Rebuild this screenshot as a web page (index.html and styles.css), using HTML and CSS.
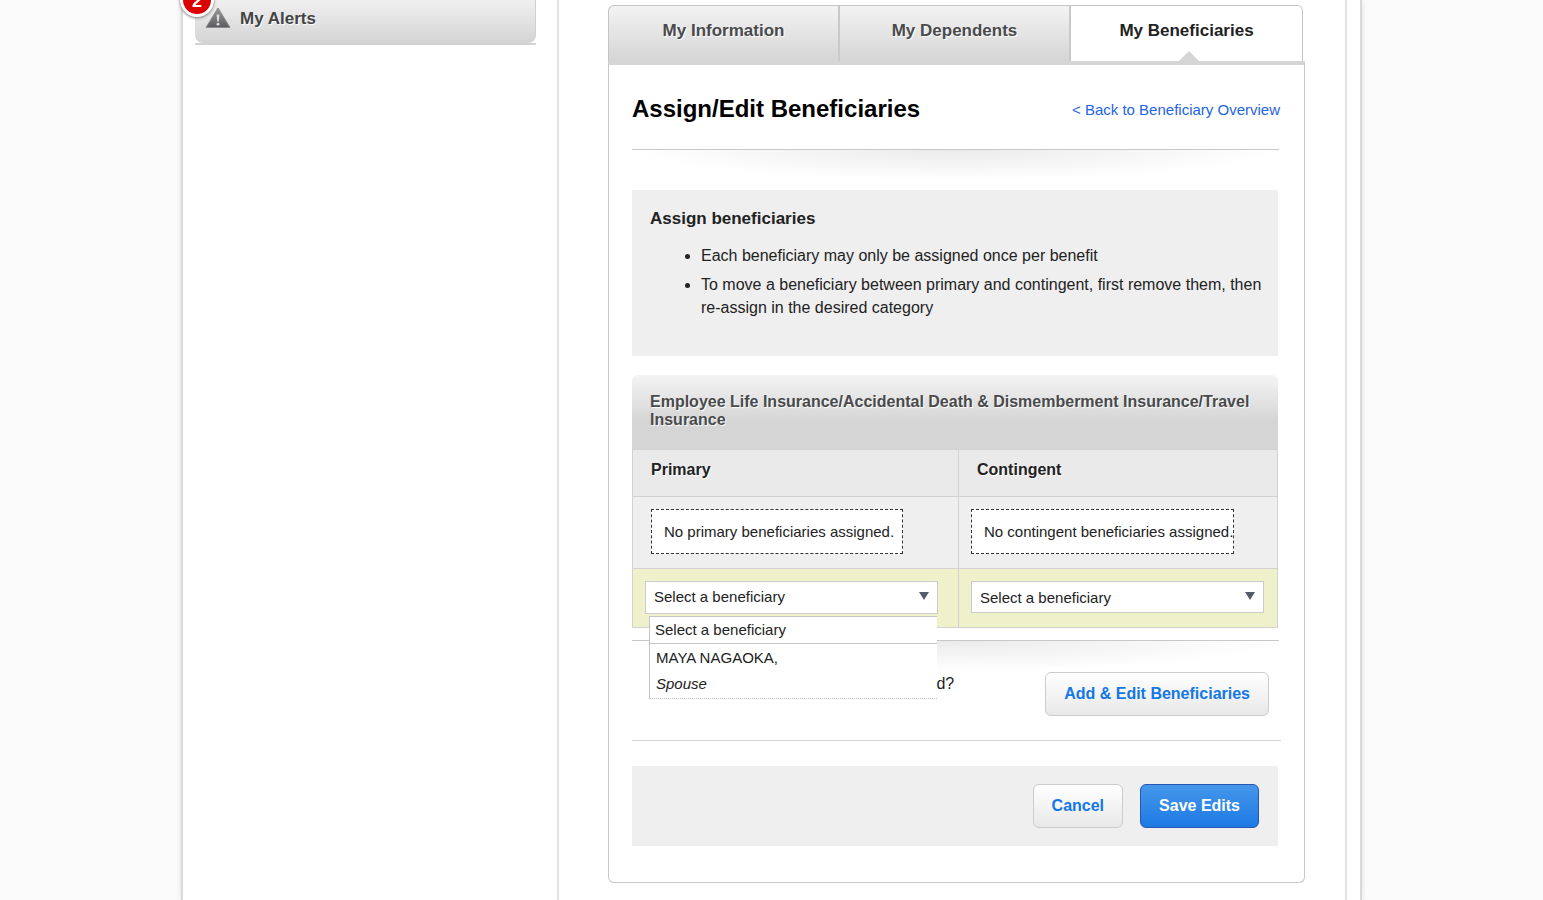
FILE: index.html
```html
<!DOCTYPE html>
<html lang="en">
<head>
<meta charset="utf-8">
<meta name="viewport" content="width=device-width, initial-scale=1">
<title>My Beneficiaries</title>
<link rel="stylesheet" href="styles.css">
</head>
<body>
<div class="page">
  <aside class="sidebar">
    <div class="alerts">
      <span class="badge">2</span>
      <svg class="alert-icon" viewBox="0 0 26 22" aria-hidden="true">
        <defs><linearGradient id="tri" x1="0" y1="0" x2="0" y2="1"><stop offset="0" stop-color="#999"/><stop offset="1" stop-color="#5c5d60"/></linearGradient></defs>
        <path d="M13 1 L25 20.5 H1 Z" fill="url(#tri)" stroke="#8a8a8c" stroke-width="1" stroke-linejoin="round"/>
        <path d="M11.6 7.5 H14.4 L13.8 14.5 H12.2 Z" fill="#ddd"/>
        <circle cx="13" cy="17.2" r="1.4" fill="#ddd"/>
      </svg>
      <h2 class="alerts-title">My Alerts</h2>
    </div>
    <div class="alerts-line"></div>
  </aside>
  <main class="main">
    <nav class="tabs">
      <a class="tab" href="#information">My Information</a>
      <a class="tab" href="#dependents">My Dependents</a>
      <a class="tab tab-active" href="#beneficiaries" aria-current="page">My Beneficiaries</a>
    </nav>
    <section class="panel">
      <header class="panel-head">
        <h1 class="title">Assign/Edit Beneficiaries</h1>
        <a class="back" href="#overview">&lt; Back to Beneficiary Overview</a>
      </header>
      <div class="shadow-rule"></div>
      <section class="info">
        <h2 class="info-title">Assign beneficiaries</h2>
        <ul class="info-list">
          <li>Each beneficiary may only be assigned once per benefit</li>
          <li>To move a beneficiary between primary and contingent, first remove them, then re-assign in the desired category</li>
        </ul>
      </section>
      <table class="benefit">
        <caption>Employee Life Insurance/Accidental Death &amp; Dismemberment Insurance/Travel Insurance</caption>
        <thead>
          <tr><th scope="col">Primary</th><th scope="col">Contingent</th></tr>
        </thead>
        <tbody>
          <tr class="assigned-row">
            <td class="cell-primary"><p class="empty">No primary beneficiaries assigned.</p></td>
            <td><p class="empty">No contingent beneficiaries assigned.</p></td>
          </tr>
          <tr class="select-row">
            <td>
              <div class="picker">
                <select class="picker-select picker-open" aria-label="Primary beneficiary"><option>Select a beneficiary</option><option>MAYA NAGAOKA, Spouse</option></select>
                <ul class="menu" role="listbox" aria-label="Primary beneficiary options">
                  <li class="menu-item" role="option" aria-selected="true">Select a beneficiary</li>
                  <li class="menu-item menu-person" role="option" aria-selected="false">MAYA NAGAOKA,<em>Spouse</em></li>
                </ul>
              </div>
            </td>
            <td>
              <div class="picker">
                <select class="picker-select" aria-label="Contingent beneficiary"><option>Select a beneficiary</option><option>MAYA NAGAOKA, Spouse</option></select>
              </div>
            </td>
          </tr>
        </tbody>
      </table>
      <div class="shadow-rule add-rule">
        <p class="add-text">d?</p>
        <button class="btn" type="button">Add &amp; Edit Beneficiaries</button>
      </div>
      <hr class="rule">
      <footer class="actions">
        <button class="btn" type="button">Cancel</button>
        <button class="btn btn-primary" type="submit">Save Edits</button>
      </footer>
    </section>
  </main>
</div>
</body>
</html>
```
FILE: styles.css
```css
* { box-sizing: border-box; }
body {
  margin: 0;
  background: #fbfbfb;
  color: #222;
  font-family: "Liberation Sans", Arial, sans-serif;
  font-size: 16px;
}
h1, h2, p, ul { margin: 0; padding: 0; }
.page {
  display: flex;
  max-width: 1181px;
  min-height: 100vh;
  margin: 0 auto;
  padding-right: 13px;
  background: #fff;
  border: solid #d9d9d9;
  border-width: 0 2px;
  box-shadow: 0 0 5px #ddd;
}
.sidebar {
  flex: 0 0 376px;
  padding: 0 21px 0 12px;
  border-right: 2px solid #e2e2e2;
}
.alerts {
  position: relative;
  display: flex;
  align-items: flex-start;
  gap: 9px;
  height: 43px;
  padding: 7px 10px;
  background: linear-gradient(#f0f0f0, #d4d4d4);
  border-right: 1px solid #d0d0d0;
  border-radius: 0 0 8px 8px;
}
.alert-icon { width: 26px; height: 22px; }
.alerts-title {
  color: #444;
  font-size: 17px;
  line-height: 24px;
  text-shadow: 1px 1px 1px #fff;
}
.alerts-line { height: 2px; background: #d2d2d2; }
.badge {
  position: absolute;
  top: -17px;
  left: -15px;
  width: 34px;
  height: 34px;
  border: 3px solid #fff;
  border-radius: 50%;
  background: #dc0000;
  box-shadow: 0 1px 3px #777;
  color: #fff;
  font-size: 18px;
  font-weight: bold;
  line-height: 30px;
  text-align: center;
}
.main {
  flex: 1;
  min-width: 0;
  padding: 5px 40px 17px 49px;
  border-right: 2px solid #e2e2e2;
}
.tabs {
  display: grid;
  grid-template-columns: repeat(3, 1fr);
  margin-right: 2px;
  border: 1px solid #c4c4c4;
  border-bottom: 0;
  border-radius: 6px 6px 0 0;
  background: linear-gradient(#f3f3f3, #d5d5d5);
  overflow: hidden;
}
.tab {
  position: relative;
  height: 55px;
  border-right: 2px solid #c9c9c9;
  color: #4a4a4a;
  font-size: 17px;
  font-weight: bold;
  line-height: 49px;
  text-align: center;
  text-decoration: none;
  text-shadow: 1px 1px 1px #fff;
}
.tab-active { border-right: 0; background: #fff; color: #222; }
.tab-active::after {
  content: "";
  position: absolute;
  bottom: 0;
  left: calc(50% - 8px);
  border: solid transparent;
  border-width: 0 10px 10px;
  border-bottom-color: #d5d5d5;
}
.panel {
  padding: 24px 26px 36px 23px;
  border: 1px solid #c8c8c8;
  border-top: 4px solid #d5d5d5;
  border-radius: 0 0 6px 6px;
}
.panel-head {
  display: flex;
  justify-content: space-between;
  align-items: center;
  height: 60px;
  margin-right: -2px;
  padding-bottom: 20px;
}
.title { color: #000; font-size: 24px; line-height: 40px; }
.back { color: #2464e4; font-size: 15px; text-decoration: none; }
.shadow-rule {
  height: 41px;
  margin-right: -1px;
  border-top: 1px solid #c8c8c8;
  background: radial-gradient(ellipse 50% 30px at 50% 0, #ebebeb, #fff) no-repeat;
}
.info { height: 166px; padding: 18px 12px 18px 18px; background: #efefef; }
.info-title { font-size: 17px; line-height: 21px; }
.info-list { padding: 15px 0 0 51px; line-height: 23px; }
.info-list li { margin-bottom: 6px; }
.benefit {
  width: 100%;
  margin-top: 19px;
  border-collapse: collapse;
  table-layout: fixed;
  background: #efefef;
}
.benefit caption {
  height: 74px;
  padding: 18px;
  border-radius: 6px 6px 0 0;
  background: linear-gradient(#f4f4f4, #d5d5d5 62%);
  color: #4a4a4a;
  font-weight: bold;
  line-height: 18px;
  text-align: left;
  text-shadow: 1px 1px 1px #fff;
}
.benefit th, .benefit td { border: 1px solid #d2d2d2; }
.benefit th {
  height: 47px;
  padding: 0 18px 6px;
  background: #eaeaea;
  text-align: left;
  text-shadow: 1px 1px 1px #fff;
}
.benefit th:first-child { width: 326px; }
.benefit td { padding: 12px; vertical-align: top; }
.assigned-row td { height: 72px; }
.benefit .cell-primary { padding-left: 18px; }
.empty {
  width: fit-content;
  height: 45px;
  padding: 0 8px 0 12px;
  border: 1px dashed #333;
  background: #fff;
  font-size: 15px;
  line-height: 43px;
  white-space: nowrap;
}
td:last-child .empty { padding-right: 0; }
.select-row { background: #eff1cb; }
.select-row td { height: 59px; }
.picker { position: relative; width: 293px; }
.picker::after {
  content: "";
  position: absolute;
  top: 11px;
  right: 9px;
  border: solid transparent;
  border-width: 8px 5px 0;
  border-top-color: #535b6c;
}
.picker-select {
  display: block;
  appearance: none;
  width: 100%;
  height: 32px;
  padding: 0 8px;
  border: 1px solid #ccc;
  border-radius: 0;
  background: #fff;
  color: #222;
  font: 15px "Liberation Sans", Arial, sans-serif;
}
.picker-open { height: 33px; padding-bottom: 2px; }
.menu {
  position: absolute;
  z-index: 2;
  top: 35px;
  left: 4px;
  width: 288px;
  border: 1px solid #c4c4c4;
  border-width: 1px 0 0 1px;
  background: #fff;
  font-size: 15px;
  line-height: 26px;
  list-style: none;
}
.menu-item { padding-left: 5px; border-bottom: 1px solid #c4c4c4; }
.menu-person { padding: 1px 0 1px 6px; border-bottom: 1px dotted #bbb; }
.menu-person em { display: block; }
.add-rule {
  display: flex;
  justify-content: flex-end;
  gap: 91px;
  height: 100px;
  margin-top: 12px;
  padding: 31px 10px 0 0;
}
.add-text { line-height: 24px; }
.btn {
  height: 44px;
  padding: 0 18px;
  border: 1px solid #ccc;
  border-radius: 6px;
  background: linear-gradient(#fff, #e8e8e8);
  color: #1477e6;
  font: bold 16px "Liberation Sans", Arial, sans-serif;
}
.btn-primary {
  border-color: #2a56b4;
  background: linear-gradient(#4697ea, #1d79e4);
  color: #fff;
}
.rule { height: 1px; margin: 0 -3px 25px 0; border: 0; background: #d2d2d2; }
.actions {
  display: flex;
  justify-content: flex-end;
  gap: 17px;
  padding: 18px 19px;
  background: #efefef;
}
```
